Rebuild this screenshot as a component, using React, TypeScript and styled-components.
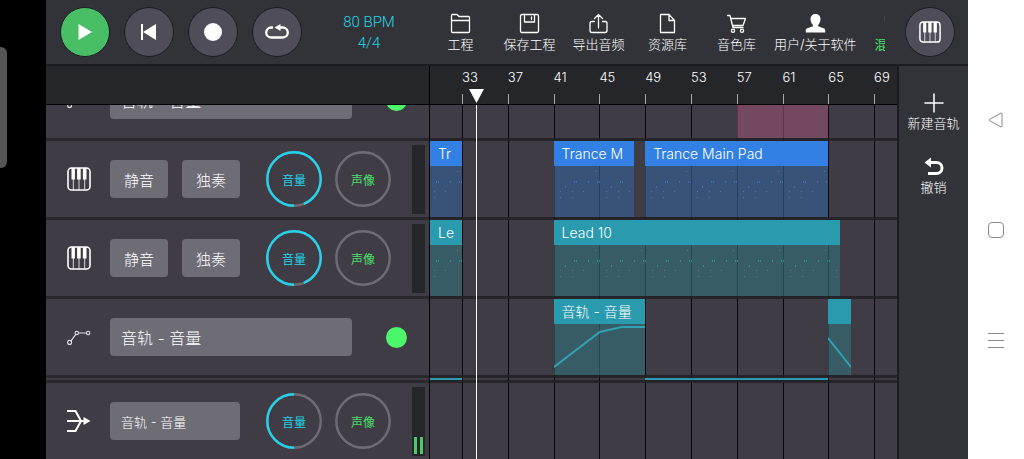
import React from 'react';
import styled, { createGlobalStyle, css } from 'styled-components';

const FIRST_BAR = 30.2;
const STEPS = 408;
const BAR_MARKS = [33, 37, 41, 45, 49, 53, 57, 61, 65, 69];
const PLAYHEAD_BAR = 34.2;

/* Ten grid columns stand for one bar. */
const column = (bar: number) =>
  Math.min(STEPS + 1, Math.max(1, Math.round((bar - FIRST_BAR) * 10) + 1));

const color = {
  panel: '#323338',
  dark: '#252629',
  row: '#3f3c46',
  control: '#6e6c75',
  round: '#4e4d58',
  edge: '#1b1a22',
  cyan: '#22d3ea',
  green: '#4ae06a',
};

const tones = {
  blue: { head: '#3280e4', body: 'rgba(54, 94, 148, 0.65)', note: '#3b7fd6' },
  teal: { head: '#2a9aae', body: 'rgba(51, 109, 119, 0.65)', note: '#2fa59f' },
  pink: { head: '#91506c', body: 'rgba(145, 78, 108, 0.65)', note: '#91506c' },
};
type Tone = keyof typeof tones;

const GlobalStyle = createGlobalStyle`
  * { box-sizing: border-box; }
  body {
    margin: 0;
    background: #000;
    color: #fff;
    font-family: Inter, 'Noto Sans CJK SC', sans-serif;
    font-weight: 300;
  }
  button {
    margin: 0;
    padding: 0;
    border: 0;
    background: none;
    color: inherit;
    font: inherit;
    cursor: pointer;
  }
  svg { display: block; flex: none; }
`;

const Screen = styled.div`
  display: flex;
  height: 100vh;
  overflow: hidden;
`;

const Bezel = styled.div`
  flex: none;
  width: 46px;
  padding-top: 47px;
  background: #000;
`;

const Handle = styled.div`
  width: 7px;
  height: 121px;
  border-radius: 0 6px 6px 0;
  background: #555;
`;

const Studio = styled.main`
  display: flex;
  flex: 1;
  flex-direction: column;
  min-width: 0;
  background: ${color.panel};
`;

const SystemNav = styled.nav`
  display: flex;
  flex: none;
  flex-direction: column;
  align-items: center;
  justify-content: center;
  gap: 94px;
  width: 56px;
  background: #fff;
`;

const TopBar = styled.header`
  display: flex;
  flex: none;
  align-items: center;
  height: 66px;
  padding: 0 13px 0 14px;
  border-bottom: 2px solid ${color.edge};
`;

const Transport = styled.div`
  display: flex;
  gap: 14px;
`;

const RoundButton = styled.button<{ $active?: boolean }>`
  display: grid;
  flex: none;
  place-items: center;
  width: 50px;
  height: 50px;
  border: 1px solid ${color.edge};
  border-radius: 50%;
  background: ${(p) => (p.$active ? '#48bf65' : color.round)};
`;

const Tempo = styled.button`
  flex: none;
  width: 124px;
  padding: 2px 0 0 10px;
  color: ${color.cyan};
  font-family: Roboto, sans-serif;
  font-size: 15px;
  line-height: 21px;
`;

const Menu = styled.nav`
  display: flex;
  flex: 1;
  align-items: center;
  min-width: 0;
  margin-right: 20px;
  padding-top: 3px;
  overflow: hidden;
`;

const ToolButton = styled.button<{ $highlight?: boolean }>`
  display: flex;
  flex: none;
  flex-direction: column;
  align-items: center;
  min-width: 69px;
  padding: 0 3px;
  color: ${(p) => (p.$highlight ? color.green : '#fff')};
  font-size: 13px;
  font-weight: ${(p) => (p.$highlight ? 400 : 300)};
  line-height: 20px;
  white-space: nowrap;
`;

const Workspace = styled.div`
  display: flex;
  flex: 1;
  min-height: 0;
`;

const Arrangement = styled.section`
  display: flex;
  flex: 1;
  flex-direction: column;
  min-width: 0;
`;

const Actions = styled.aside`
  display: flex;
  flex: none;
  flex-direction: column;
  align-items: center;
  gap: 24px;
  width: 71px;
  padding-top: 27px;
  border-left: 2px solid ${color.edge};
`;

const RulerRow = styled.div`
  display: flex;
  flex: none;
  height: 39px;
  border-bottom: 1px solid #000;
  background: ${color.dark};
`;

const RulerCorner = styled.div`
  flex: none;
  width: 384px;
  border-right: 1px solid #000;
`;

const Steps = styled.div`
  display: grid;
  grid-template-columns: repeat(${STEPS}, minmax(0, 1fr));
  grid-template-rows: minmax(0, 1fr);
  min-width: 0;
`;

const Layers = styled.div`
  display: grid;
  flex: 1;
  grid-template-columns: minmax(0, 1fr);
  grid-template-rows: minmax(0, 1fr);
  min-width: 0;
  overflow: hidden;

  & > * {
    grid-area: 1 / 1;
  }
`;

const Mark = styled.div`
  display: flex;
  grid-row: 1;
  flex-direction: column;
  justify-content: space-between;
  width: 20px;
  padding-top: 3px;
  font-size: 13px;
  line-height: 16px;
`;

const Tick = styled.span`
  width: 1px;
  height: 10px;
  background: #a9a9ad;
`;

const PlayheadGrip = styled.svg`
  grid-row: 1;
  align-self: end;
  width: 15px;
  height: 15px;
  margin-left: -7px;
`;

const Tracks = styled.div`
  display: flex;
  flex: 1;
  min-height: 0;
  overflow: hidden;
  background: ${color.row};
`;

/* Both halves are scrolled so that the first track is half hidden. */
const scrolled = css`
  margin-top: -43px;
`;

const TrackHeads = styled.div`
  ${scrolled}
  flex: none;
  width: 384px;
  border-right: 1px solid #000;
`;

const Stage = styled(Layers)`
  ${scrolled}
`;

const TrackHead = styled.div`
  display: flex;
  align-items: center;
  height: 79px;
  padding: 0 4px 0 21px;
  border-bottom: 3px solid #28282d;
`;

const ThinHead = styled.div`
  height: 5px;
  border-bottom: 3px solid #28282d;
`;

const TrackIcon = styled.div`
  flex: none;
  width: 43px;
`;

const Controls = styled.div`
  display: flex;
  flex: none;
  gap: 14px;
  width: 130px;
  margin-right: 26px;
`;

const PadButton = styled.button`
  flex: 1;
  height: 38px;
  border-radius: 4px;
  background: ${color.control};
  font-size: 15px;
`;

const NameButton = styled(PadButton)<{ $wide?: boolean }>`
  flex: ${(p) => (p.$wide ? '0 0 242px' : '1')};
  padding: 0 11px;
  font-size: ${(p) => (p.$wide ? 16 : 13)}px;
  text-align: left;
`;

const EnableBox = styled.input`
  width: 21px;
  height: 21px;
  margin: 0 18px 0 auto;
  border-radius: 50%;
  background: ${color.control};
  appearance: none;

  &:checked {
    background: #4cf66a;
  }
`;

const Knobs = styled.div`
  display: flex;
  flex: none;
  gap: 13px;
`;

const KnobLabel = styled.label<{ $tint: string }>`
  display: grid;
  place-items: center;
  width: 56px;
  height: 56px;
  color: ${(p) => p.$tint};
  font-size: 12px;
  font-weight: 400;

  & > * {
    grid-area: 1 / 1;
  }

  input {
    width: 56px;
    height: 56px;
    margin: 0;
    opacity: 0;
  }
`;

const MeterBox = styled.div`
  display: flex;
  flex: none;
  align-items: flex-end;
  gap: 3px;
  width: 13px;
  height: 69px;
  margin-left: auto;
  padding: 2px;
  background: ${color.dark};
`;

const MeterBar = styled.span`
  flex: 1;
  height: 17px;
  background: #4cc868;
`;

const GridLine = styled.span`
  grid-row: 1;
  width: 1px;
  background: #08070b;
`;

const Lane = styled(Steps)`
  height: 79px;
  border-bottom: 3px solid rgba(32, 32, 37, 0.85);
`;

const ThinLane = styled(Steps)`
  height: 5px;
  border-bottom: 3px solid rgba(32, 32, 37, 0.85);
`;

const ClipBox = styled.div<{ $tone: Tone; $solid?: boolean }>`
  display: flex;
  grid-row: 1;
  flex-direction: column;
  min-width: 0;
  overflow: hidden;
  background: ${(p) => (p.$solid ? tones[p.$tone].head : tones[p.$tone].body)};
`;

const ClipTitle = styled.div<{ $tone: Tone }>`
  flex: none;
  height: 25px;
  padding-left: 8px;
  background: ${(p) => tones[p.$tone].head};
  font-size: 14px;
  line-height: 25px;
  white-space: nowrap;
`;

const ClipDrawing = styled.svg`
  flex: 1;
  width: 100%;
  min-height: 0;
`;

const Playhead = styled.span`
  grid-row: 1;
  width: 1px;
  background: #fff;
`;

const line = {
  fill: 'none',
  stroke: 'currentColor',
  strokeLinecap: 'round' as const,
  strokeLinejoin: 'round' as const,
};

const PianoIcon = ({ size = 24 }: { size?: number }) => (
  <svg width={size} height={size} viewBox="0 0 24 24" aria-hidden="true">
    <rect x="1" y="1" width="22" height="22" rx="3.5" {...line} strokeWidth="1.6" />
    <path d="M4.500 1h3.400v11.500H4.500zM10.100 1h3.600v11.500h-3.600zM15.900 1h3.600v11.500h-3.600z" fill="currentColor" />
    <path d="M6.300 12v11M12 12v11M17.700 12v11" {...line} strokeWidth="0.800" />
  </svg>
);

const CurveIcon = () => (
  <svg width="24" height="24" viewBox="0 0 24 24" aria-hidden="true">
    <g {...line} strokeWidth="1.100" opacity="0.850">
      <circle cx="2.600" cy="17.400" r="2" />
      <circle cx="9.800" cy="8" r="1.700" />
      <circle cx="21.200" cy="8" r="1.700" />
      <path d="M4 15.800l4.600-6.200M12.500 8h6.200" />
    </g>
  </svg>
);

const BusIcon = () => (
  <svg width="24" height="24" viewBox="0 0 24 24" aria-hidden="true">
    <path d="M0 2h8.500l5.500 10-5.500 10H0M0 12h18" fill="none" stroke="currentColor" strokeWidth="2" />
    <path d="M16.500 8l7 4-7 4z" fill="currentColor" />
  </svg>
);

const menuIcons: Record<string, React.ReactNode> = {
  folder: <path d="M1.500 18.500v-16q0-1 1-1h4.500l2 2h9.500q1 0 1 1v14q0 1-1 1h-16q-1 0-1-1zM1.500 7.500h18" />,
  save: (
    <>
      <path d="M3 1.500h15q1.500 0 1.500 1.500v15q0 1.500-1.500 1.500H3q-1.500 0-1.500-1.500V3q0-1.500 1.500-1.500z" />
      <path d="M5.500 1.500v7.500h10V1.500M12.500 4v2.500" />
    </>
  ),
  exporting: <path d="M6.500 8.500H4q-2 0-2 2v7q0 2 2 2h13q2 0 2-2v-7q0-2-2-2h-2.500M10.500 15V1.500M6.500 5.500l4-4 4 4" />,
  file: <path d="M3.500 1.500h8.500l5.500 6v12h-14zM12 1.500v6h5.500" />,
  cart: (
    <>
      <path d="M1.500 2.500h2.500l3 12h10M4.800 5.500h14.700l-2.500 7H6.500" />
      <circle cx="7" cy="17.800" r="1.600" />
      <circle cx="16" cy="17.800" r="1.600" />
    </>
  ),
  user: (
    <path
      d="M10.500 1c3.200 0 5 2 5 5 0 2.500-1 4.700-2.400 5.900v1.400l5.400 2c1 .4 1.700 1 1.700 2v2.200H.8v-2.200c0-1 .7-1.600 1.700-2l5.400-2v-1.400C6.500 10.700 5.500 8.500 5.500 6c0-3 1.800-5 5-5z"
      fill="currentColor"
      stroke="none"
    />
  ),
  mixer: <path d="M1.500 4v4M10.500 2v10M10.500 16v3M19.500 2v4M19.500 10v9" />,
};

const MenuIcon = ({ name }: { name: string }) => (
  <svg width="21" height="21" viewBox="0 0 21 21" aria-hidden="true">
    <g {...line} strokeWidth="1.300">
      {menuIcons[name]}
    </g>
  </svg>
);

const menuItems = [
  { icon: 'folder', label: '工程' },
  { icon: 'save', label: '保存工程' },
  { icon: 'exporting', label: '导出音频' },
  { icon: 'file', label: '资源库' },
  { icon: 'cart', label: '音色库' },
  { icon: 'user', label: '用户/关于软件' },
  { icon: 'mixer', label: '混音台', highlight: true },
];

const Knob = ({ label, value, tint }: { label: string; value: number; tint: string }) => (
  <KnobLabel $tint={tint}>
    <svg width="56" height="56" viewBox="0 0 56 56" aria-hidden="true">
      <circle cx="28" cy="28" r="26.700" fill="none" stroke={color.control} strokeWidth="2.400" />
      {value > 0 && (
        <circle
          cx="28"
          cy="28"
          r="26.700"
          fill="none"
          stroke={color.cyan}
          strokeWidth="2.400"
          pathLength="100"
          strokeDasharray={`${value} 100`}
          transform="rotate(90 28 28)"
        />
      )}
    </svg>
    <span>{label}</span>
    <input type="range" min="0" max="100" defaultValue={value} />
  </KnobLabel>
);

const TrackKnobs = ({ volume }: { volume: number }) => (
  <Knobs>
    <Knob label="音量" value={volume} tint={color.cyan} />
    <Knob label="声像" value={0} tint={color.green} />
  </Knobs>
);

const InstrumentHead = () => (
  <TrackHead>
    <TrackIcon>
      <PianoIcon />
    </TrackIcon>
    <Controls>
      <PadButton type="button">静音</PadButton>
      <PadButton type="button">独奏</PadButton>
    </Controls>
    <TrackKnobs volume={94} />
    <MeterBox />
  </TrackHead>
);

const AutomationHead = () => (
  <TrackHead>
    <TrackIcon>
      <CurveIcon />
    </TrackIcon>
    <NameButton type="button" $wide>
      音轨 - 音量
    </NameButton>
    <EnableBox type="checkbox" defaultChecked aria-label="音轨 - 音量" />
  </TrackHead>
);

const BusHead = () => (
  <TrackHead>
    <TrackIcon>
      <BusIcon />
    </TrackIcon>
    <Controls>
      <NameButton type="button">音轨 - 音量</NameButton>
    </Controls>
    <TrackKnobs volume={50} />
    <MeterBox>
      <MeterBar />
      <MeterBar />
    </MeterBox>
  </TrackHead>
);

/* One four-bar phrase, as x and y of each note inside the clip body. */
const phrase = [
  [41, 5], [20, 15], [22, 15], [34, 15], [43, 15], [45, 15],
  [11, 20], [6, 25], [18, 25], [29, 25], [6, 31], [18, 31],
];

const Notes = ({ id, tone, shift = 0 }: { id: string; tone: Tone; shift?: number }) => (
  <ClipDrawing aria-hidden="true">
    <defs>
      <pattern id={id} x={shift} width="46" height="60" patternUnits="userSpaceOnUse">
        {phrase.map(([x, y]) => (
          <rect
            key={`${x}-${y}`}
            x={x}
            y={y}
            width="1"
            height={y === 15 || y === 20 ? 2 : 1}
            fill={y === 15 || y === 20 ? tones[tone].note : '#8fa5b8'}
            opacity={y === 15 || y === 20 ? 0.7 : 0.4}
          />
        ))}
      </pattern>
    </defs>
    <rect width="100%" height="100%" fill={`url(#${id})`} />
  </ClipDrawing>
);

const Curve = ({ width, points }: { width: number; points: string }) => (
  <ClipDrawing viewBox={`0 0 ${width} 51`} preserveAspectRatio="none" aria-hidden="true">
    <polyline points={points} fill="none" stroke="#2fa3b5" strokeWidth="2" vectorEffect="non-scaling-stroke" />
  </ClipDrawing>
);

type ClipProps = {
  from: number;
  to: number;
  tone: Tone;
  title?: string;
  solid?: boolean;
  children?: React.ReactNode;
};

const Clip = ({ from, to, tone, title, solid, children }: ClipProps) => (
  <ClipBox $tone={tone} $solid={solid} style={{ gridColumn: `${column(from)} / ${column(to)}` }}>
    {title !== undefined && <ClipTitle $tone={tone}>{title}</ClipTitle>}
    {children}
  </ClipBox>
);

export default function App() {
  return (
    <Screen>
      <GlobalStyle />
      <Bezel>
        <Handle />
      </Bezel>
      <Studio>
        <TopBar>
          <Transport>
            <RoundButton type="button" $active aria-label="播放">
              <svg width="24" height="24" viewBox="0 0 24 24">
                <path d="M5.500 4L19 12 5.500 20z" fill="#fff" />
              </svg>
            </RoundButton>
            <RoundButton type="button" aria-label="回到开头">
              <svg width="24" height="24" viewBox="0 0 24 24">
                <path d="M4 4h2v16H4zM19 4v16L6 12z" fill="#fff" />
              </svg>
            </RoundButton>
            <RoundButton type="button" aria-label="录音">
              <svg width="24" height="24" viewBox="0 0 24 24">
                <circle cx="12" cy="12" r="9" fill="#fff" />
              </svg>
            </RoundButton>
            <RoundButton type="button" aria-label="循环">
              <svg width="24" height="24" viewBox="0 0 24 24">
                <path d="M8 7.500H6.200a5 5 0 0 0 0 10h11.600a5 5 0 0 0 0-10H14" fill="none" stroke="#fff" strokeWidth="2.300" />
                <path d="M15.500 4v7L9.500 7.500z" fill="#fff" />
              </svg>
            </RoundButton>
          </Transport>
          <Tempo type="button">
            80 BPM
            <br />
            4/4
          </Tempo>
          <Menu>
            {menuItems.map((item) => (
              <ToolButton key={item.label} type="button" $highlight={item.highlight}>
                <MenuIcon name={item.icon} />
                {item.label}
              </ToolButton>
            ))}
          </Menu>
          <RoundButton type="button" aria-label="键盘">
            <PianoIcon size={22} />
          </RoundButton>
        </TopBar>
        <Workspace>
          <Arrangement>
            <RulerRow>
              <RulerCorner />
              <Layers>
                <Steps>
                  {BAR_MARKS.map((bar) => (
                    <Mark key={bar} style={{ gridColumnStart: column(bar) }}>
                      {bar}
                      <Tick />
                    </Mark>
                  ))}
                </Steps>
                <Steps>
                  <PlayheadGrip viewBox="0 0 15 15" style={{ gridColumnStart: column(PLAYHEAD_BAR) }}>
                    <path d="M0 0h15L7.500 14z" fill="#fff" />
                  </PlayheadGrip>
                </Steps>
              </Layers>
            </RulerRow>
            <Tracks>
              <TrackHeads>
                <AutomationHead />
                <InstrumentHead />
                <InstrumentHead />
                <AutomationHead />
                <ThinHead />
                <BusHead />
              </TrackHeads>
              <Stage>
                <Steps>
                  {BAR_MARKS.map((bar) => (
                    <GridLine key={bar} style={{ gridColumnStart: column(bar) }} />
                  ))}
                </Steps>
                <div>
                  <Lane>
                    <Clip from={57} to={65} tone="pink" />
                  </Lane>
                  <Lane>
                    <Clip from={30} to={33} tone="blue" title="Tr">
                      <Notes id="notes-pad-a" tone="blue" shift={-14} />
                    </Clip>
                    <Clip from={41} to={48} tone="blue" title="Trance M">
                      <Notes id="notes-pad-b" tone="blue" />
                    </Clip>
                    <Clip from={49} to={65} tone="blue" title="Trance Main Pad">
                      <Notes id="notes-pad-c" tone="blue" />
                    </Clip>
                  </Lane>
                  <Lane>
                    <Clip from={30} to={33} tone="teal" title="Le">
                      <Notes id="notes-lead-a" tone="teal" shift={-14} />
                    </Clip>
                    <Clip from={41} to={66} tone="teal" title="Lead 10">
                      <Notes id="notes-lead-b" tone="teal" />
                    </Clip>
                  </Lane>
                  <Lane>
                    <Clip from={41} to={49} tone="teal" title="音轨 - 音量">
                      <Curve width={92} points="0,43 46,8 68,3 92,3" />
                    </Clip>
                    <Clip from={65} to={67} tone="teal" title="">
                      <Curve width={23} points="0,14 23,43" />
                    </Clip>
                  </Lane>
                  <ThinLane>
                    <Clip from={30} to={33} tone="teal" solid />
                    <Clip from={49} to={65} tone="teal" solid />
                  </ThinLane>
                  <Lane />
                </div>
                <Steps>
                  <Playhead style={{ gridColumnStart: column(PLAYHEAD_BAR) }} />
                </Steps>
              </Stage>
            </Tracks>
          </Arrangement>
          <Actions>
            <ToolButton type="button">
              <svg width="20" height="20" viewBox="0 0 20 20" aria-hidden="true">
                <path d="M10 1v18M1 10h18" {...line} strokeWidth="1.500" />
              </svg>
              新建音轨
            </ToolButton>
            <ToolButton type="button">
              <svg width="20" height="20" viewBox="0 0 20 20" aria-hidden="true">
                <path d="M5 5.500h7.500a5.500 5.500 0 0 1 0 11H4" fill="none" stroke="currentColor" strokeWidth="3" />
                <path d="M0.500 5.500l6.500-5v10z" fill="currentColor" />
              </svg>
              撤销
            </ToolButton>
          </Actions>
        </Workspace>
      </Studio>
      <SystemNav>
        <svg width="16" height="16" viewBox="0 0 16 16" aria-label="返回">
          <path d="M14 1.500v13q0 .8-1 .4L1.500 8.600q-1-.6 0-1.200L13 1.100q1-.4 1 .4z" fill="none" stroke="#8a8a8a" />
        </svg>
        <svg width="16" height="16" viewBox="0 0 16 16" aria-label="主屏幕">
          <rect x="0.500" y="0.500" width="15" height="15" rx="3.500" fill="none" stroke="#8a8a8a" />
        </svg>
        <svg width="16" height="16" viewBox="0 0 16 16" aria-label="最近任务">
          <path d="M0 1.500h16M0 8.500h16M0 15.500h16" fill="none" stroke="#8a8a8a" />
        </svg>
      </SystemNav>
    </Screen>
  );
}
